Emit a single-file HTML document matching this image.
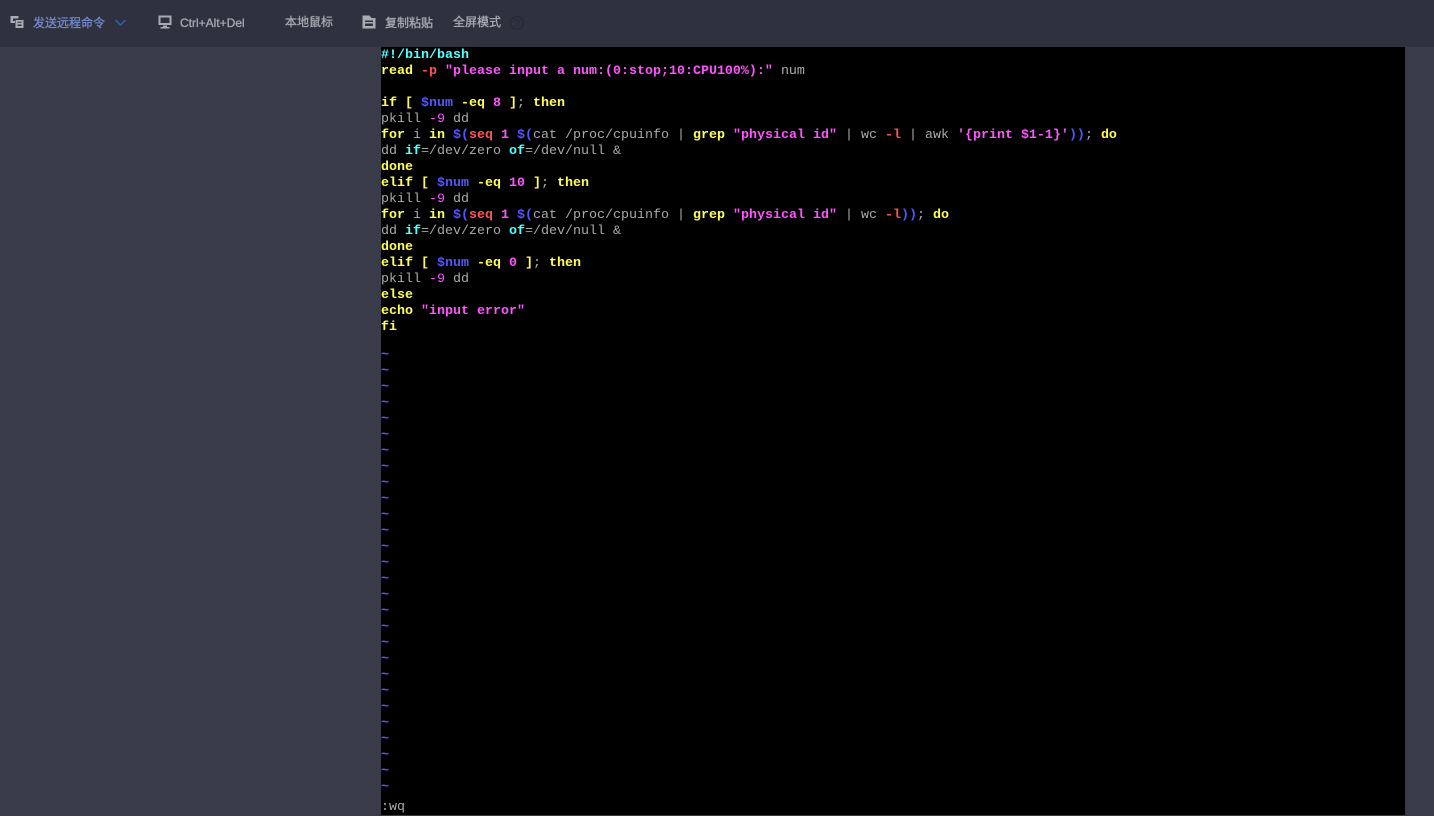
<!DOCTYPE html>
<html lang="zh">
<head>
<meta charset="utf-8">
<title>远程控制台</title>
<style>
html,body{margin:0;padding:0;width:1434px;height:816px;overflow:hidden;background:#393c48}
#bar{position:absolute;left:0;top:0;width:1434px;height:47px;background:#2f323e}
.t{position:absolute;top:14px;height:16px;line-height:16px;font-size:12px;color:#a9abb2;font-family:"Liberation Sans","Noto Sans CJK SC",sans-serif;white-space:nowrap;-webkit-text-stroke:.3px currentColor}
svg{position:absolute}
#term{position:absolute;left:381px;top:47px;width:1024px;height:768px;background:#000;overflow:hidden;font:bold 13.333px/16px "Liberation Mono",monospace;color:#aaa}
#term div{height:16px;white-space:pre;position:relative;top:1px}
#term div.b{top:-3px}
.g{font-weight:normal}
.c{color:#5ff}.y{color:#ff5}.m{color:#f5f}.r{color:#f55}#term .b,.b{color:#55f}
</style>
</head>
<body>
<div id="bar">
<svg style="left:10px;top:15px" width="14" height="14" viewBox="0 0 14 14"><path d="M0.500 1h8v2.500H3V6h2v2H0.500zM5.500 5h8v8h-8zM7.500 6.800v1h4v-1zM7.500 9.500v1.500h4V9.500z" fill="#a9abb2" fill-rule="evenodd"/></svg>
<div class="t" style="left:33px;top:15px;color:#748ace">发送远程命令</div>
<svg style="left:114px;top:18px" width="13" height="10" viewBox="0 0 13 10"><path d="M1.500 2l5 5 5-5" fill="none" stroke="#2f5fb5" stroke-width="1.500"/></svg>
<svg style="left:158px;top:15px" width="14" height="14" viewBox="0 0 14 14"><path d="M0.500 0.500h13v9.500h-13zM5 10.500h4V12h2.500v1.500h-9V12H5z" fill="#a9abb2"/><path d="M2.500 2.500h9v5.500h-9z" fill="#2f323e"/></svg>
<div class="t" style="left:180px;top:15px">Ctrl+Alt+Del</div>
<div class="t" style="left:285px">本地鼠标</div>
<svg style="left:362px;top:15px" width="14" height="14" viewBox="0 0 14 14"><path d="M0.500 0.500h7l2 2.500h4v10.500H0.500zM3 5.500V7h8V5.500zM3 8.500v2.500h8V8.500z" fill="#a9abb2" fill-rule="evenodd"/></svg>
<div class="t" style="left:385px;top:15px">复制粘贴</div>
<div class="t" style="left:453px">全屏模式</div>
<svg style="left:510px;top:16px" width="14" height="14" viewBox="0 0 14 14"><circle cx="7" cy="7" r="6.400" fill="none" stroke="#24262f" stroke-width="1"/><text x="7" y="10.500" font-size="10" text-anchor="middle" fill="#24262f" font-family="Liberation Sans, sans-serif">?</text></svg>
</div>
<div id="term"><div class="c">#!/bin/bash</div><div><span class="y">read</span> <span class="r">-p</span> <span class="m">"please input a num:(0:stop;10:CPU100%):"</span> <span class="g">num</span></div><div></div><div><span class="y">if [</span> <span class="b">$num</span> <span class="y">-eq</span> <span class="m">8</span> <span class="y">]</span><span class="g">;</span> <span class="y">then</span></div><div class="g">pkill <span class="m">-9</span> dd</div><div><span class="y">for</span> <span class="g">i</span> <span class="y">in</span> <span class="b">$(</span><span class="r">seq</span> <span class="m">1</span> <span class="b">$(</span><span class="g">cat /proc/cpuinfo | </span><span class="y">grep</span> <span class="m">"physical id"</span> <span class="g">|</span> <span class="g">wc</span> <span class="r">-l</span> <span class="g">| awk</span> <span class="m">'{print $1-1}'</span><span class="b">))</span><span class="g">;</span> <span class="y">do</span></div><div class="g">dd <span class="c" style="font-weight:bold">if</span>=/dev/zero <span class="c" style="font-weight:bold">of</span>=/dev/null &amp;</div><div class="y">done</div><div><span class="y">elif [</span> <span class="b">$num</span> <span class="y">-eq</span> <span class="m">10</span> <span class="y">]</span><span class="g">;</span> <span class="y">then</span></div><div class="g">pkill <span class="m">-9</span> dd</div><div><span class="y">for</span> <span class="g">i</span> <span class="y">in</span> <span class="b">$(</span><span class="r">seq</span> <span class="m">1</span> <span class="b">$(</span><span class="g">cat /proc/cpuinfo | </span><span class="y">grep</span> <span class="m">"physical id"</span> <span class="g">| wc</span> <span class="r">-l</span><span class="b">))</span><span class="g">;</span> <span class="y">do</span></div><div class="g">dd <span class="c" style="font-weight:bold">if</span>=/dev/zero <span class="c" style="font-weight:bold">of</span>=/dev/null &amp;</div><div class="y">done</div><div><span class="y">elif [</span> <span class="b">$num</span> <span class="y">-eq</span> <span class="m">0</span> <span class="y">]</span><span class="g">;</span> <span class="y">then</span></div><div class="g">pkill <span class="m">-9</span> dd</div><div class="y">else</div><div><span class="y">echo</span> <span class="m">"input error"</span></div><div class="y">fi</div><div></div><div class="b">~</div><div class="b">~</div><div class="b">~</div><div class="b">~</div><div class="b">~</div><div class="b">~</div><div class="b">~</div><div class="b">~</div><div class="b">~</div><div class="b">~</div><div class="b">~</div><div class="b">~</div><div class="b">~</div><div class="b">~</div><div class="b">~</div><div class="b">~</div><div class="b">~</div><div class="b">~</div><div class="b">~</div><div class="b">~</div><div class="b">~</div><div class="b">~</div><div class="b">~</div><div class="b">~</div><div class="b">~</div><div class="b">~</div><div class="b">~</div><div class="b">~</div><div class="g">:wq</div></div>
</body>
</html>
